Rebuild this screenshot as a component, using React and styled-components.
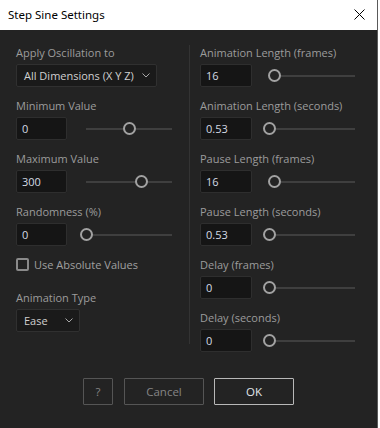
import React from "react";
import styled, { createGlobalStyle } from "styled-components";

const Global = createGlobalStyle`
  html, body { margin: 0; padding: 0; background: #ffffff; }
  body { font-family: "Open Sans", "Noto Sans", sans-serif; }
  * { box-sizing: border-box; }
`;

const Window = styled.div`
  width: 378px;
  height: 428px;
  background: #232323;
  border-right: 1px solid #5a5a5a;
  display: flex;
  flex-direction: column;
  overflow: hidden;
`;

const TitleBar = styled.div`
  height: 30px;
  flex: none;
  background: #ffffff;
  display: flex;
  align-items: center;
  justify-content: space-between;
  padding: 0 8px 1px 8px;
  font-family: "Noto Sans", "Open Sans", sans-serif;
  font-size: 11.5px;
  color: #000;
`;

const CloseBtn = styled.div`
  width: 14px;
  height: 14px;
  margin-right: 3px;
  display: flex;
  align-items: center;
  justify-content: center;
`;

const Content = styled.div`
  display: flex;
  align-items: stretch;
  padding: 16px 0 0 16px;
`;

const Column = styled.div`
  display: flex;
  flex-direction: column;
  width: 155px;
  flex: none;
`;

const Divider = styled.div`
  width: 1px;
  flex: none;
  background: #333333;
  margin: -1px 10px 8px 18px;
`;

const Group = styled.div`
  display: flex;
  flex-direction: column;
  margin-bottom: ${(p) => (p.$last ? 0 : 12)}px;
`;

const Label = styled.div`
  height: 14px;
  line-height: 14px;
  font-size: 11px;
  color: #9c9c9c;
  margin-bottom: 4px;
  white-space: nowrap;
`;

const Row = styled.div`
  display: flex;
  align-items: center;
  height: 23px;
`;

const Input = styled.div`
  width: ${(p) => p.$w}px;
  height: 23px;
  background: #151515;
  border: 1px solid #2e2e2e;
  border-radius: 2px;
  padding-left: 5px;
  display: flex;
  align-items: center;
  font-size: 11px;
  color: #d4dbe4;
  flex: none;
`;

const Select = styled.div`
  width: ${(p) => p.$w}px;
  height: ${(p) => p.$h}px;
  background: #1a1a1a;
  border: 1px solid #303030;
  border-radius: 2px;
  padding: 0 6px 0 7px;
  display: flex;
  align-items: center;
  justify-content: space-between;
  font-size: 11px;
  color: #d0d0d0;
  white-space: nowrap;
`;

const Slider = styled.div`
  width: 98px;
  flex: none;
  height: 14px;
  margin-left: ${(p) => p.$ml}px;
  padding: 0 6px;
  display: flex;
  align-items: center;
`;

const Track = styled.div`
  position: relative;
  flex: 1;
  height: 2px;
  background: #3f3f3f;
`;

const Thumb = styled.div`
  position: absolute;
  top: 50%;
  width: 13px;
  height: 13px;
  margin-left: -6.5px;
  margin-top: -6.5px;
  border: 2px solid #a2a2a2;
  border-radius: 50%;
  background: #232323;
`;

const CheckRow = styled.div`
  display: flex;
  align-items: center;
  height: 13px;
  margin-bottom: 20px;
`;

const Box = styled.div`
  width: 13px;
  height: 13px;
  border: 2px solid #8a8a8a;
  border-radius: 2px;
  margin-right: 5px;
`;

const CheckLabel = styled.span`
  font-size: 11px;
  color: #a0a0a0;
  line-height: 13px;
`;

const Footer = styled.div`
  display: flex;
  justify-content: flex-start;
  padding-left: 83px;
  margin-top: 26px;
  gap: 10px;
`;

const Button = styled.div`
  width: ${(p) => p.$w}px;
  height: 27px;
  border: 1px solid ${(p) => (p.$primary ? "#b8b8b8" : "#555555")};
  border-radius: 1px;
  display: flex;
  align-items: center;
  justify-content: center;
  font-size: 11.5px;
  color: ${(p) => (p.$primary ? "#e2e6ec" : "#858585")};
  margin-right: ${(p) => p.$mr || 0}px;
`;

const Chevron = () => (
  <svg width="8" height="5" viewBox="0 0 8 5">
    <path d="M0.5 0.5 L4 4 L7.5 0.5" fill="none" stroke="#a8a8a8" strokeWidth="1" />
  </svg>
);

const SliderCtl = ({ pos, ml }) => (
  <Slider $ml={ml}>
    <Track>
      <Thumb style={{ left: `${pos}%` }} />
    </Track>
  </Slider>
);

const Field = ({ label, value, pos, w, ml, last }) => (
  <Group $last={last}>
    <Label>{label}</Label>
    <Row>
      <Input $w={w}>{value}</Input>
      <SliderCtl pos={pos} ml={ml} />
    </Row>
  </Group>
);

export default function App() {
  return (
    <>
      <Global />
      <Window>
        <TitleBar>
          <span>Step Sine Settings</span>
          <CloseBtn>
            <svg width="11" height="11" viewBox="0 0 11 11">
              <path d="M0.5 0.5 L10.5 10.5 M10.5 0.5 L0.5 10.5" stroke="#000" strokeWidth="1" />
            </svg>
          </CloseBtn>
        </TitleBar>
        <Content>
          <Column>
            <Group>
              <Label>Apply Oscillation to</Label>
              <Select $w={141} $h={23}>
                <span>All Dimensions (X Y Z)</span>
                <Chevron />
              </Select>
            </Group>
            <Field label="Minimum Value" value="0" pos={51} w={51} ml={13} />
            <Field label="Maximum Value" value="300" pos={64} w={51} ml={13} />
            <Field label="Randomness (%)" value="0" pos={0} w={51} ml={13} />
            <CheckRow>
              <Box />
              <CheckLabel>Use Absolute Values</CheckLabel>
            </CheckRow>
            <Group $last>
              <Label>Animation Type</Label>
              <Select $w={64} $h={23}>
                <span>Ease</span>
                <Chevron />
              </Select>
            </Group>
          </Column>
          <Divider />
          <Column>
            <Field label="Animation Length (frames)" value="16" pos={6} w={52} ml={11} />
            <Field label="Animation Length (seconds)" value="0.53" pos={0} w={52} ml={11} />
            <Field label="Pause Length (frames)" value="16" pos={6} w={52} ml={11} />
            <Field label="Pause Length (seconds)" value="0.53" pos={0} w={52} ml={11} />
            <Field label="Delay (frames)" value="0" pos={0} w={52} ml={11} />
            <Field label="Delay (seconds)" value="0" pos={0} w={52} ml={11} last />
          </Column>
        </Content>
        <Footer>
          <Button $w={30} $mr={1}>?</Button>
          <Button $w={80}>Cancel</Button>
          <Button $w={80} $primary>OK</Button>
        </Footer>
      </Window>
    </>
  );
}
